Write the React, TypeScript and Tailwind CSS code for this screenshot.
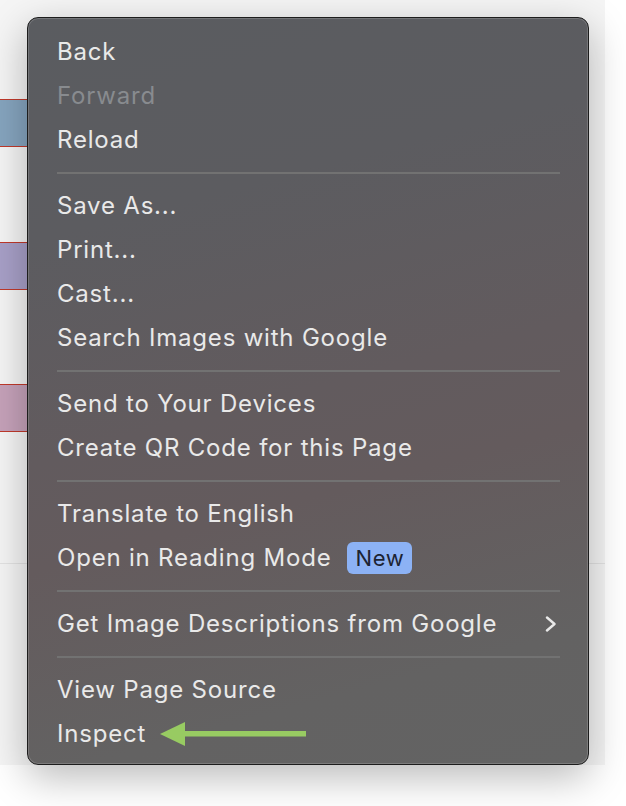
import React from "react";

type Item =
  | { kind: "item"; label: string; disabled?: boolean; badge?: string; submenu?: boolean; arrow?: boolean }
  | { kind: "sep" };

const items: Item[] = [
  { kind: "item", label: "Back" },
  { kind: "item", label: "Forward", disabled: true },
  { kind: "item", label: "Reload" },
  { kind: "sep" },
  { kind: "item", label: "Save As..." },
  { kind: "item", label: "Print..." },
  { kind: "item", label: "Cast..." },
  { kind: "item", label: "Search Images with Google" },
  { kind: "sep" },
  { kind: "item", label: "Send to Your Devices" },
  { kind: "item", label: "Create QR Code for this Page" },
  { kind: "sep" },
  { kind: "item", label: "Translate to English" },
  { kind: "item", label: "Open in Reading Mode", badge: "New" },
  { kind: "sep" },
  { kind: "item", label: "Get Image Descriptions from Google", submenu: true },
  { kind: "sep" },
  { kind: "item", label: "View Page Source" },
  { kind: "item", label: "Inspect", arrow: true },
];

export default function App() {
  return (
    <div className="relative w-[626px] h-[806px] bg-white overflow-hidden font-['Inter','Liberation_Sans',sans-serif]">
      {/* underlying page */}
      <div className="w-[605px] h-[765px] bg-[#f5f5f5] flex flex-col">
        <div className="h-[99px]" />
        <div className="h-[48px] w-[40px] bg-[#86a5bf] border-y border-[#c0392b]" />
        <div className="h-[95px]" />
        <div className="h-[48px] w-[40px] bg-[#a8a0c8] border-y border-[#c0392b]" />
        <div className="h-[94px]" />
        <div className="h-[48px] w-[40px] bg-[#c6a2ba] border-y border-[#c0392b]" />
        <div className="h-[131px]" />
        <div className="h-px w-full bg-[#e3e3e3]" />
      </div>

      {/* context menu */}
      <div className="absolute left-[27px] top-[17px] w-[562px] h-[748px] rounded-[11px] border border-[#1d1d1d] shadow-[0_12px_40px_rgba(0,0,0,0.28),inset_0_0_0_1px_rgba(255,255,255,0.16)] bg-[linear-gradient(165deg,#5a5c60_0%,#5c5c60_25%,#625b5e_50%,#645b5d_62%,#636262_85%,#636363_100%)] pt-[12px] pb-[8px] pl-[29px] pr-[28px] flex flex-col">
        {items.map((it, i) =>
          it.kind === "sep" ? (
            <div key={i} className="h-[22px] flex items-center">
              <div className="h-[2px] w-full bg-[#727272]" />
            </div>
          ) : (
            <div
              key={i}
              className={`h-[44px] flex items-center text-[24px] tracking-[0.8px] ${
                it.disabled ? "text-[#888b8f]" : "text-[#e9e9e9]"
              }`}
            >
              <span>{it.label}</span>
              {it.badge && (
                <span className="ml-[16px] h-[32px] w-[65px] rounded-[6px] bg-[#8cb2f5] text-[#1c2433] text-[22px] tracking-[0.6px] flex items-center justify-center">
                  {it.badge}
                </span>
              )}
              {it.submenu && (
                <svg className="ml-auto mr-[3px]" width="12" height="16" viewBox="0 0 12 16">
                  <polyline points="2,1.5 9.5,8 2,14.5" fill="none" stroke="#e9e9e9" strokeWidth="2.4" strokeLinecap="round" strokeLinejoin="round" />
                </svg>
              )}
              {it.arrow && (
                <svg className="ml-[14px]" width="146" height="26" viewBox="0 0 146 26">
                  <polygon points="0,13 25,1 25,25" fill="#98cb62" />
                  <rect x="22" y="10" width="124" height="5.5" fill="#98cb62" />
                </svg>
              )}
            </div>
          )
        )}
      </div>
    </div>
  );
}
